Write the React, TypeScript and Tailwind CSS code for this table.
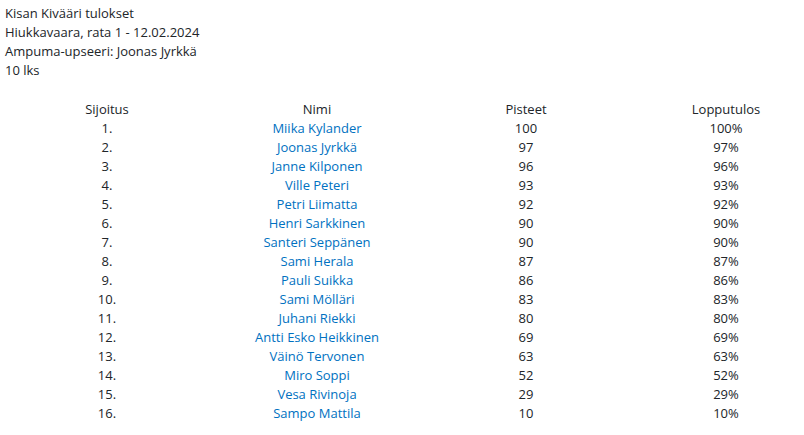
import React from "react";

const rows: [string, string, number, string][] = [
  ["1.", "Miika Kylander", 100, "100%"],
  ["2.", "Joonas Jyrkkä", 97, "97%"],
  ["3.", "Janne Kilponen", 96, "96%"],
  ["4.", "Ville Peteri", 93, "93%"],
  ["5.", "Petri Liimatta", 92, "92%"],
  ["6.", "Henri Sarkkinen", 90, "90%"],
  ["7.", "Santeri Seppänen", 90, "90%"],
  ["8.", "Sami Herala", 87, "87%"],
  ["9.", "Pauli Suikka", 86, "86%"],
  ["10.", "Sami Mölläri", 83, "83%"],
  ["11.", "Juhani Riekki", 80, "80%"],
  ["12.", "Antti Esko Heikkinen", 69, "69%"],
  ["13.", "Väinö Tervonen", 63, "63%"],
  ["14.", "Miro Soppi", 52, "52%"],
  ["15.", "Vesa Rivinoja", 29, "29%"],
  ["16.", "Sampo Mattila", 10, "10%"],
];

export default function App() {
  return (
    <div className="w-[804px] h-[435px] overflow-hidden bg-white text-[#212529] text-[13px] leading-[19px] [font-family:'Open_Sans',sans-serif]">
      <div className="pl-[5px] pt-[4px]">
        <div>Kisan Kivääri tulokset</div>
        <div>Hiukkavaara, rata 1 - 12.02.2024</div>
        <div>Ampuma-upseeri: Joonas Jyrkkä</div>
        <div>10 lks</div>
      </div>
      <div className="mt-[20px] grid grid-cols-[214px_206px_212px_188px] text-center">
        <div>Sijoitus</div>
        <div>Nimi</div>
        <div>Pisteet</div>
        <div>Lopputulos</div>
        {rows.map((r) => (
          <React.Fragment key={r[0]}>
            <div>{r[0]}</div>
            <div>
              <a className="text-[#0071c1]">{r[1]}</a>
            </div>
            <div>{r[2]}</div>
            <div>{r[3]}</div>
          </React.Fragment>
        ))}
      </div>
    </div>
  );
}
